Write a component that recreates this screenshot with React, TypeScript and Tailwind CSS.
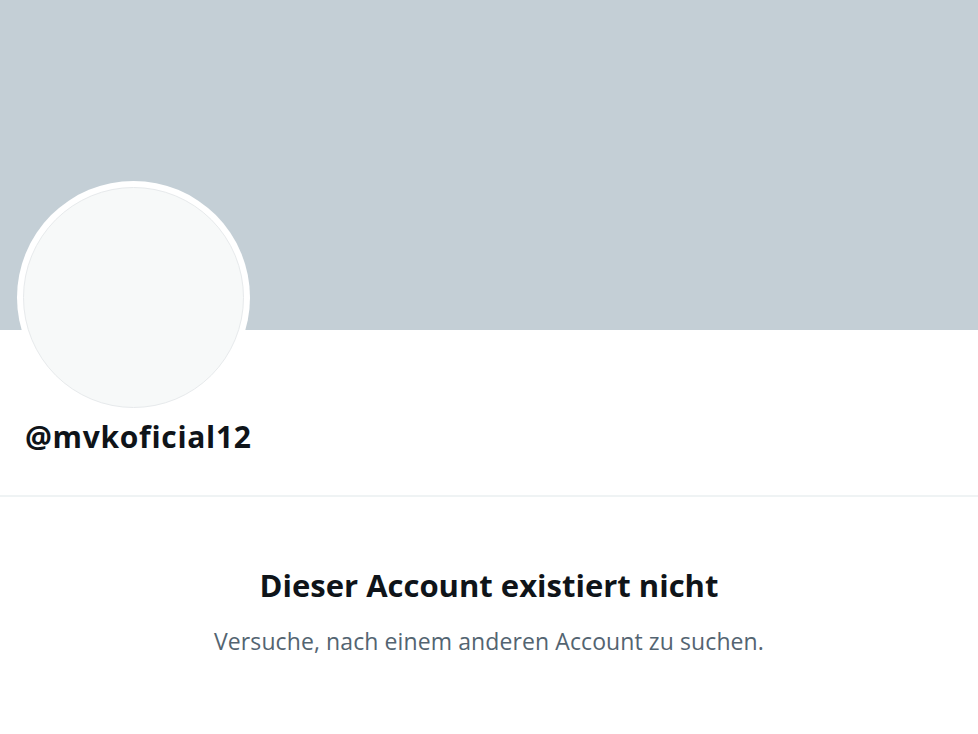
export default function App() {
  return (
    <div
      className="min-h-screen w-full bg-white"
      style={{ fontFamily: '"Open Sans", "Noto Sans", sans-serif' }}
    >
      {/* Banner */}
      <div className="h-[330px] w-full bg-[#c4cfd6]" />

      {/* Profile header */}
      <div className="border-b-2 border-[#eff3f4] px-[17px] pb-[41px]">
        <div className="-mt-[149px] h-[233px] w-[233px] rounded-full bg-white p-[6px]">
          <div className="h-full w-full rounded-full border border-[#e7eaec] bg-[#f7f9f9]" />
        </div>
        <div className="mt-[6px] pl-[8px] text-[30px] font-bold leading-[34px] tracking-[0.7px] text-[#0f1419]">
          @mvkoficial12
        </div>
      </div>

      {/* Empty state */}
      <div className="flex flex-col items-center pt-[69px]">
        <h2 className="text-[31px] font-bold leading-[38px] text-[#0f1419]">
          Dieser Account existiert nicht
        </h2>
        <p className="mt-[22px] text-[23px] leading-[30px] tracking-[0.1px] text-[#536471]">
          Versuche, nach einem anderen Account zu suchen.
        </p>
      </div>
    </div>
  );
}
